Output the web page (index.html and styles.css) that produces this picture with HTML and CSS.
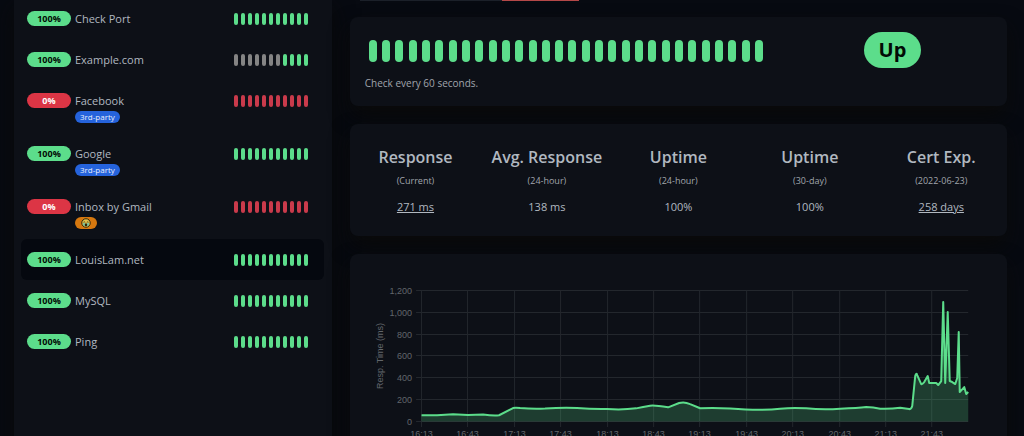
FILE: index.html
```
<!DOCTYPE html>
<html lang="en">
<head>
    <meta charset="utf-8">
    <meta name="viewport" content="width=device-width, initial-scale=1">
    <title>LouisLam.net</title>
    <link rel="stylesheet" href="styles.css">
</head>
<body>
<div class="page">
    <nav class="monitor-list">
        <a class="item" href="#">
            <span class="pill">100%</span>
            <span class="name">Check Port</span>
            <span class="beats" data-beats="uuuuuuuuuuu"></span>
        </a>
        <a class="item" href="#">
            <span class="pill">100%</span>
            <span class="name">Example.com</span>
            <span class="beats" data-beats="eeeeeeeuuuu"></span>
        </a>
        <a class="item" href="#">
            <span class="pill down">0%</span>
            <span class="name">Facebook</span>
            <span class="beats" data-beats="ddddddddddd"></span>
            <span class="tag">3rd-party</span>
        </a>
        <a class="item" href="#">
            <span class="pill">100%</span>
            <span class="name">Google</span>
            <span class="beats" data-beats="uuuuuuuuuuu"></span>
            <span class="tag">3rd-party</span>
        </a>
        <a class="item" href="#">
            <span class="pill down">0%</span>
            <span class="name">Inbox by Gmail</span>
            <span class="beats" data-beats="ddddddddddd"></span>
            <span class="tag orange">
                <svg width="10" height="10" viewBox="0 0 20 20">
                    <circle cx="10" cy="10" r="8.5" fill="#e3c34c" stroke="#33270c" stroke-width="2"/>
                    <path d="M5 8.5q1.500-1.500 3.500 0M11.500 8.500q2-1.500 3.500 0" fill="none" stroke="#33270c" stroke-width="1.600"/>
                    <path d="M4.500 10h3v6.500q-2-.8-3-2.500zM12.500 10h3v4q-1 1.700-3 2.500z" fill="#62c6b5"/>
                    <ellipse cx="10" cy="13.500" rx="2.500" ry="3" fill="#33270c"/>
                </svg>
            </span>
        </a>
        <a class="item active" href="#">
            <span class="pill">100%</span>
            <span class="name">LouisLam.net</span>
            <span class="beats" data-beats="uuuuuuuuuuu"></span>
        </a>
        <a class="item" href="#">
            <span class="pill">100%</span>
            <span class="name">MySQL</span>
            <span class="beats" data-beats="uuuuuuuuuuu"></span>
        </a>
        <a class="item" href="#">
            <span class="pill">100%</span>
            <span class="name">Ping</span>
            <span class="beats" data-beats="uuuuuuuuuuu"></span>
        </a>
    </nav>

    <main class="details">
        <div class="actions">
            <button class="btn" type="button" aria-label="Edit"></button>
            <button class="btn danger" type="button" aria-label="Delete"></button>
        </div>

        <section class="card status">
            <div class="history">
                <div class="beats big" data-beats="uuuuuuuuuuuuuuuuuuuuuuuuuuuuuu"></div>
                <p class="interval">Check every 60 seconds.</p>
            </div>
            <div class="state">
                <span class="state-pill">Up</span>
            </div>
        </section>

        <section class="card stats">
            <div class="stat">
                <h4>Response</h4>
                <p class="sub">(Current)</p>
                <a class="value" href="#">271 ms</a>
            </div>
            <div class="stat">
                <h4>Avg. Response</h4>
                <p class="sub">(24-hour)</p>
                <span class="value">138 ms</span>
            </div>
            <div class="stat">
                <h4>Uptime</h4>
                <p class="sub">(24-hour)</p>
                <span class="value">100%</span>
            </div>
            <div class="stat">
                <h4>Uptime</h4>
                <p class="sub">(30-day)</p>
                <span class="value">100%</span>
            </div>
            <div class="stat">
                <h4>Cert Exp.</h4>
                <p class="sub">(2022-06-23)</p>
                <a class="value" href="#">258 days</a>
            </div>
        </section>

        <section class="card">
            <svg class="chart" viewBox="350 254 657 220">
                <g id="grid" class="grid"></g>
                <path class="area" d="M421.500 415.300L437 415.300L453 414.300L468 415L483 414.400Q493 415.800 499 415.200L513 408Q515 407.300 520 408Q532 409 545 408.500Q563 407.300 577 408Q592 409.300 607 409Q623 410 636 408.300Q643 406.800 650 405.700Q654 405 668 407.300L679 403Q684 401.300 690 404L700 408.200Q715 407.500 730 408.500Q762 411 780 408.600Q793 407.300 806 408.300Q823 410 840 408.700Q858 408 866 407Q873 407 880 408.600Q890 409 900 407.700L909 409Q911 409.500 912 406L915 376Q916 372 917 375L921 384Q922 384.500 924 382L927.500 376L929 383L936 383L938 385L941 381L943 302L945 383L947.500 312L949.500 381L952 382L955 384L957 378L958.500 332L959.500 392L964 387L966 394L968 392V421.500H421.500Z"/>
                <path class="line" d="M421.500 415.300L437 415.300L453 414.300L468 415L483 414.400Q493 415.800 499 415.200L513 408Q515 407.300 520 408Q532 409 545 408.500Q563 407.300 577 408Q592 409.300 607 409Q623 410 636 408.300Q643 406.800 650 405.700Q654 405 668 407.300L679 403Q684 401.300 690 404L700 408.200Q715 407.500 730 408.500Q762 411 780 408.600Q793 407.300 806 408.300Q823 410 840 408.700Q858 408 866 407Q873 407 880 408.600Q890 409 900 407.700L909 409Q911 409.500 912 406L915 376Q916 372 917 375L921 384Q922 384.500 924 382L927.500 376L929 383L936 383L938 385L941 381L943 302L945 383L947.500 312L949.500 381L952 382L955 384L957 378L958.500 332L959.500 392L964 387L966 394L968 392"/>
                <text class="axis" text-anchor="middle" transform="translate(383 356) rotate(-90)">Resp. Time (ms)</text>
            </svg>
        </section>
    </main>
</div>

<script>
    const beatClass = {u: 'up', d: 'down', e: 'empty'};

    document.querySelectorAll('.beats').forEach(bar => {
        for (const beat of bar.dataset.beats) {
            const el = document.createElement('span');
            el.className = 'beat ' + beatClass[beat];
            bar.appendChild(el);
        }
    });

    const yLabels = ['1,200', '1,000', '800', '600', '400', '200', '0'];
    const xLabels = ['16:13', '16:43', '17:13', '17:43', '18:13', '18:43', '19:13', '19:43', '20:13', '20:43', '21:13', '21:43'];
    let grid = '';
    yLabels.forEach((label, i) => {
        const y = Math.round(290 + i * 21.83) + 0.5;
        grid += `<path d="M416 ${y}H968"/><text class="axis" text-anchor="end" x="412" y="${y + 3}">${label}</text>`;
    });
    xLabels.forEach((label, i) => {
        const x = Math.round(421 + i * 46.4) + 0.5;
        grid += `<path d="M${x} 290V427"/><text class="axis" text-anchor="middle" x="${x}" y="437">${label}</text>`;
    });
    document.getElementById('grid').innerHTML = grid;
</script>
</body>
</html>
```
FILE: styles.css
```
* {
    box-sizing: border-box;
}

body {
    margin: 0;
    height: 100vh;
    overflow: hidden;
    background-color: #070a11;
    color: #b1b8c0;
    font-family: "Open Sans", "Noto Sans", sans-serif;
    font-size: 11px;
}

h4, p {
    margin: 0;
}

a {
    color: inherit;
}

.page {
    display: grid;
    grid-template-columns: 32% 1fr;
    gap: 18px;
    padding: 0 17px 0 14px;
}

.monitor-list {
    min-height: 100vh;
    margin-top: -2px;
    padding: 0 8px 0 7px;
    background-color: #0d1017;
    box-shadow: 0 10px 20px #0a0a0a;
}

.item {
    display: grid;
    grid-template-columns: 44px 1fr auto;
    column-gap: 4px;
    align-items: center;
    padding: 10px 16px 10px 6px;
    border-radius: 6px;
    line-height: 21px;
    text-decoration: none;
}

.item.active {
    background-color: #05080f;
}

.pill {
    height: 15px;
    border-radius: 8px;
    background-color: #5cdd8b;
    color: #020b05;
    font-size: 9px;
    font-weight: 700;
    line-height: 15px;
    text-align: center;
}

.pill.down {
    background-color: #dc3545;
    color: #fff;
}

.tag {
    grid-column: 2;
    justify-self: start;
    height: 12px;
    padding: 0 5px;
    border-radius: 6px;
    background-color: #2563dc;
    color: #e8eefb;
    font-size: 8px;
    line-height: 12px;
}

.tag.orange {
    padding: 0 6px;
    background-color: #d6780f;
}

.tag svg {
    display: block;
    margin-top: 1px;
}

.beats {
    display: flex;
    gap: 3px;
}

.beat {
    width: 4px;
    height: 12px;
    border-radius: 2px;
    background-color: #5cdd8b;
}

.beat.down {
    background-color: #c93a4b;
}

.beat.empty {
    background-color: #848484;
}

.beats.big {
    justify-content: space-between;
    gap: 0;
    padding: 0 20px 0 4px;
}

.big .beat {
    width: 8px;
    height: 22px;
    border-radius: 4px;
}

.actions {
    display: flex;
    align-items: flex-end;
    height: 1px;
    margin: 0 10px 16px;
}

.btn {
    width: 142px;
    height: 1px;
    padding: 0;
    border: 0;
    background-color: #1b2029;
}

.btn.danger {
    width: 77px;
    background-color: #b54848;
}

.card {
    margin-bottom: 18px;
    border-radius: 8px;
    background-color: #0d1017;
    box-shadow: 0 10px 20px #0a0a0a;
}

.status {
    display: grid;
    grid-template-columns: 2fr 1fr;
    padding: 15px;
}

.history {
    padding-top: 8px;
}

.interval {
    margin: 14px 0 1px;
    color: #a0a5ac;
    font-size: 10px;
    line-height: 14px;
}

.state {
    padding-left: 10px;
    text-align: center;
}

.state-pill {
    display: inline-block;
    padding: 0 15px;
    border-radius: 19px;
    background-color: #5cdd8b;
    color: #020b05;
    font-size: 20px;
    font-weight: 700;
    line-height: 36px;
}

.stats {
    display: grid;
    grid-template-columns: repeat(5, 1fr);
    padding: 21px 0 18px;
    text-align: center;
}

.stat h4 {
    font-size: 16px;
    font-weight: 600;
    line-height: 24px;
}

.sub {
    margin: 5px 0 8px;
    color: #a0a5ac;
    font-size: 9px;
    line-height: 14px;
}

.value {
    display: block;
    font-size: 11px;
    line-height: 22px;
}

.chart {
    display: block;
    width: 100%;
}

.grid {
    stroke: #23272d;
    fill: none;
}

.axis {
    fill: #62666b;
    stroke: none;
    font-family: "Liberation Sans", Arial, sans-serif;
    font-size: 9px;
}

.area {
    fill: #5cdd8b;
    fill-opacity: 0.22;
}

.line {
    fill: none;
    stroke: #5cdd8b;
    stroke-width: 2;
    stroke-linejoin: round;
}
```
